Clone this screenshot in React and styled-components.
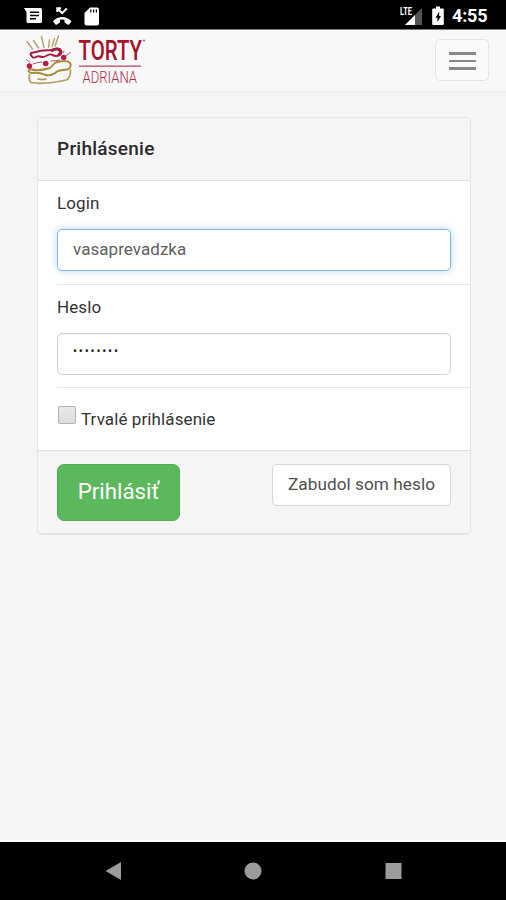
import React from 'react';
import styled, { createGlobalStyle } from 'styled-components';

export default function App() {
  return <Screen>
    <GlobalStyle/>
    <StatusBar>
      <StatusLeft/>
      <StatusRight/>
      <Clock>4:55</Clock>
    </StatusBar>
    <Navbar>
      <Logo/>
      <MenuBtn type="button" aria-label="Menu">
        <MenuLine/>
        <MenuLine/>
        <MenuLine/>
      </MenuBtn>
    </Navbar>
    <Content>
      <LoginPanel/>
    </Content>
    <SystemNav>
      <BackIcon/>
      <HomeIcon/>
      <RecentIcon/>
    </SystemNav>
  </Screen>
}

function LoginPanel() {
  return <Panel>
    <PanelHeading>Prihlásenie</PanelHeading>
    <PanelBody>
      <Field>
        <Label htmlFor="login">Login</Label>
        <Input id="login" type="text" className="active" defaultValue="vasaprevadzka"/>
      </Field>
      <Field>
        <Label htmlFor="password">Heslo</Label>
        <Input id="password" type="password" defaultValue="password"/>
      </Field>
      <CheckRow>
        <Checkbox type="checkbox"/>
        <span>Trvalé prihlásenie</span>
      </CheckRow>
    </PanelBody>
    <PanelFooter>
      <SubmitBtn type="button">Prihlásiť</SubmitBtn>
      <ForgotBtn type="button">Zabudol som heslo</ForgotBtn>
    </PanelFooter>
  </Panel>
}

const GlobalStyle = createGlobalStyle`
  * {
    box-sizing: border-box;
  }

  body {
    margin: 0;
    background-color: #f5f5f5;
    font-family: Roboto, "Helvetica", "Arial", sans-serif;
  }

  button, input {
    font-family: inherit;
    margin: 0;
    outline: none;
  }
`

const Screen = styled.div`
  width: 506px;
  height: 900px;
  display: flex;
  flex-direction: column;
  overflow: hidden;
  color: #333;
  background-color: #f5f5f5;
`

const StatusBar = styled.div`
  height: 30px;
  flex-shrink: 0;
  display: flex;
  align-items: center;
  padding: 0 18px 0 24px;
  background-color: #000;
  border-bottom: 1px solid #777;
`

const Clock = styled.span`
  margin: 3px 0 0 6px;
  width: 36px;
  color: #fff;
  font-size: 18px;
  font-weight: 700;
  line-height: 22px;
  letter-spacing: -0.2px;
  white-space: nowrap;
`

const Navbar = styled.div`
  height: 63px;
  flex-shrink: 0;
  display: flex;
  justify-content: space-between;
  align-items: flex-start;
  padding: 0 17px 0 20px;
  background-color: #f8f8f8;
  border-bottom: 2px solid #efefef;
`

const MenuBtn = styled.button`
  width: 54px;
  height: 42px;
  margin-top: 9px;
  padding: 2px 0 0;
  display: flex;
  flex-direction: column;
  justify-content: center;
  align-items: center;
  gap: 5px;
  background-color: #fafafa;
  border: 1.5px solid #e5e5e5;
  border-radius: 5px;
`

const MenuLine = styled.span`
  width: 27px;
  height: 2.5px;
  background-color: #888;
`

const Content = styled.div`
  flex: 1;
  padding: 24px 35px 0 37px;
  border-bottom: 2px solid #fff;
`

const Panel = styled.div`
  height: 417px;
  display: flex;
  flex-direction: column;
  background-color: #fff;
  border: 1px solid #e4e4e4;
  border-radius: 5px;
  box-shadow: 0 1px 1px rgba(0, 0, 0, 0.07);
  overflow: hidden;
`

const PanelHeading = styled.div`
  height: 63px;
  padding: 0 19px;
  line-height: 61px;
  font-size: 19px;
  font-weight: 500;
  letter-spacing: 0.25px;
  color: #2b2b2b;
  background-color: #f5f5f5;
  border-bottom: 1px solid #dedede;
`

const PanelBody = styled.div`
  flex: 1;
  padding-left: 19px;
`

const Field = styled.div`
  height: 103.5px;
  padding: 10px 19px 0 0;
  border-bottom: 1.5px solid #e6e6e6;
`

const Label = styled.label`
  display: block;
  height: 38px;
  line-height: 24px;
  font-size: 17px;
  letter-spacing: 0.1px;
`

const Input = styled.input`
  display: block;
  width: 100%;
  height: 42px;
  padding: 0 15px 2px;
  color: #606060;
  font-size: 17px;
  letter-spacing: 0.05px;
  background-color: #fff;
  border: 1.5px solid #d2d2d2;
  border-radius: 5px;
  box-shadow: inset 0 1px 1px rgba(0, 0, 0, 0.05);

  &[type="password"] {
    font-size: 12px;
    letter-spacing: 1.8px;
    padding-bottom: 5px;
    color: #222;
  }

  &.active {
    border-color: #84b8e4;
    box-shadow: 0 0 7px rgba(102, 175, 233, 0.5);
  }
`

const CheckRow = styled.label`
  display: flex;
  align-items: flex-start;
  gap: 5px;
  padding: 18px 0 0 1px;
  font-size: 17px;
  line-height: 26px;
  letter-spacing: 0.1px;
`

const Checkbox = styled.input`
  appearance: none;
  width: 18px;
  height: 18px;
  border: 1.5px solid #b2b2b2;
  border-radius: 2px;
  background: linear-gradient(#e9e9e9, #dcdcdc);
`

const PanelFooter = styled.div`
  height: 83px;
  padding: 13px 19px;
  display: flex;
  justify-content: space-between;
  align-items: flex-start;
  background-color: #f5f5f5;
  border-top: 1px solid #dedede;
`

const Btn = styled.button`
  padding: 0;
  border-radius: 5px;
  white-space: nowrap;
`

const SubmitBtn = styled(Btn)`
  width: 123px;
  height: 57px;
  padding-bottom: 3px;
  color: #fff;
  font-size: 22.3px;
  background-color: #5cb85c;
  border: 1px solid #4cae4c;
  border-radius: 7px;
`

const ForgotBtn = styled(Btn)`
  width: 179px;
  height: 42px;
  padding-bottom: 2px;
  color: #505050;
  font-size: 17.2px;
  letter-spacing: 0.05px;
  background-color: #fff;
  border: 1.5px solid #d6d6d6;
`

const SystemNav = styled.div`
  height: 58px;
  flex-shrink: 0;
  display: flex;
  justify-content: space-between;
  align-items: center;
  padding: 0 104px;
  background-color: #000;
`

// messages, missed call, sd card
const StatusLeft = () => <StatusLeftSVG viewBox="0 0 78 24">
  <path d="M0 4h16.500q1.500 0 1.500 1.500v12q0 1.500-1.500 1.500H4q-1.500 0-1.500-1.500V8z" fill="#fff"/>
  <path d="M6 8.200h9M6 11.500h9M6 14.800h6" stroke="#000" strokeWidth="1.500"/>
  <path d="M29 17.500c4-6 14.500-6 18.500 0l-3 3.500-4-2.500v-2.700q-2.200-.7-4.500 0v2.700l-4 2.500z" fill="#fff"/>
  <path d="M33.300 8V4.200h3.800M33.800 4.700l4.300 4.500 4.800-4.700" fill="none" stroke="#fff" strokeWidth="2"/>
  <path d="M66 3.500H73q2 0 2 2v14q0 2-2 2H62.500q-2 0-2-2V9z" fill="#fff"/>
  <path d="M66.800 5.500v3M69.600 5.500v3M72.400 5.500v3" stroke="#000" strokeWidth="1.200"/>
</StatusLeftSVG>
const StatusLeftSVG = styled.svg`
  width: 78px;
  height: 24px;
  margin-top: 3px;
  margin-right: auto;
`

// LTE signal and charging battery
const StatusRight = () => <StatusRightSVG viewBox="0 0 46 24">
  <path d="M22 5v17H5z" fill="#555"/>
  <path d="M15 12v10H5z" fill="#fff"/>
  <text x="0" y="11.500" textLength="12" lengthAdjust="spacingAndGlyphs" stroke="#000" strokeWidth="2" paintOrder="stroke">LTE</text>
  <path d="M36 3.500h4v2h2.800q1 0 1 1V21q0 1-1 1h-9.600q-1 0-1-1V6.500q0-1 1-1H36z" fill="#fff"/>
  <path d="M39.300 8.500l-3.800 6.200h2V19l3.500-6h-1.900z" fill="#000"/>
</StatusRightSVG>
const StatusRightSVG = styled.svg`
  width: 46px;
  height: 24px;
  margin-top: 1px;

  text {
    fill: #fff;
    font-size: 10px;
    font-weight: 700;
  }
`

const Logo = () => <LogoSVG viewBox="0 0 130 60" role="img" aria-label="Torty Adriana">
  <g fill="none" strokeLinecap="round" strokeLinejoin="round">
    <path d="M7 11.500l5.500 7.500M13.500 10.500l5 7.500M21.500 6.500l2.500 11M29.500 10l-1 7M34.500 8.500l-2.500 8M38.500 6l-3.500 10" stroke="#b6a06c" strokeWidth="1.400"/>
    <path d="M13 27.500q-4-3.500-1.500-4.500c8-2.500 15-3 19-3 3-.5 7-2.500 9.500-.8 2.500 2.300 1.500 5-.5 6-2.500 1.300-5 1-7-.3-3.500-2-5.500 1.500-9 2-3.500.5-4-1.500-6.500-.4-1.500 1-2.500 1.500-4 1z" stroke="#a51d3e" strokeWidth="1.900"/>
    <path d="M32 20.500q4.500-2.500 7.500-.5 2.500 2.500-.5 4.500" stroke="#a51d3e" strokeWidth="3"/>
    <path d="M9.700 39c6 2 14 1 20-1 3-1.500 3-4 6-5.500 4-1 9-2.500 13-.7 3.500 2.500 2 6.500-1.500 7.700-4 1-7 0-10 2-4 3.500-8 5-13 3-4-2-8-2-13-1.500-3-1-3.500-2.500-1.500-4" stroke="#a98a38" strokeWidth="1.900"/>
    <path d="M9.500 44.500c-.5 3-1 6 1.500 8 11 2 26-.5 35-2.500 4-1 4.500-6 4.500-10M18 49q5 1 8 0" stroke="#b39a5a" strokeWidth="1.700"/>
    <path d="M9.500 32l-3-2.500M46 26l4.500-3.500M43 23l1-2M13 34q5-2 9-2M31 31q5 0 9-1" stroke="#b8506c" strokeWidth="1"/>
  </g>
  <g fill="#b51d43">
    <circle cx="9.400" cy="36" r="2.700"/>
    <circle cx="25.700" cy="33.500" r="2.800"/>
    <circle cx="43.700" cy="27.500" r="2.700"/>
  </g>
  <text className="brand" x="58.500" y="30" textLength="63.500" lengthAdjust="spacingAndGlyphs">TORTY</text>
  <circle cx="124" cy="10.500" r="1" fill="#b35a6c"/>
  <path d="M59 36.200h62" stroke="#b8455a" strokeWidth="1.200"/>
  <text className="name" x="62.500" y="52.800" textLength="54.500" lengthAdjust="spacingAndGlyphs">ADRIANA</text>
</LogoSVG>
const LogoSVG = styled.svg`
  width: 130px;
  height: 60px;
  overflow: visible;

  .brand {
    fill: #a5122c;
    font-size: 27px;
    font-weight: 500;
  }

  .name {
    fill: #b02a45;
    font-size: 16px;
    font-weight: 300;
  }
`

const NavSVG = styled.svg`
  width: 18px;
  height: 18px;
  fill: #9b9b9b;
`
const BackIcon = () => <NavSVG viewBox="0 0 18 18"><path d="M1.500 9L17 0v18z"/></NavSVG>
const HomeIcon = () => <NavSVG viewBox="0 0 18 18"><circle cx="9" cy="9" r="8.500"/></NavSVG>
const RecentIcon = () => <NavSVG viewBox="0 0 18 18"><path d="M1.500 1h16v16h-16z"/></NavSVG>
